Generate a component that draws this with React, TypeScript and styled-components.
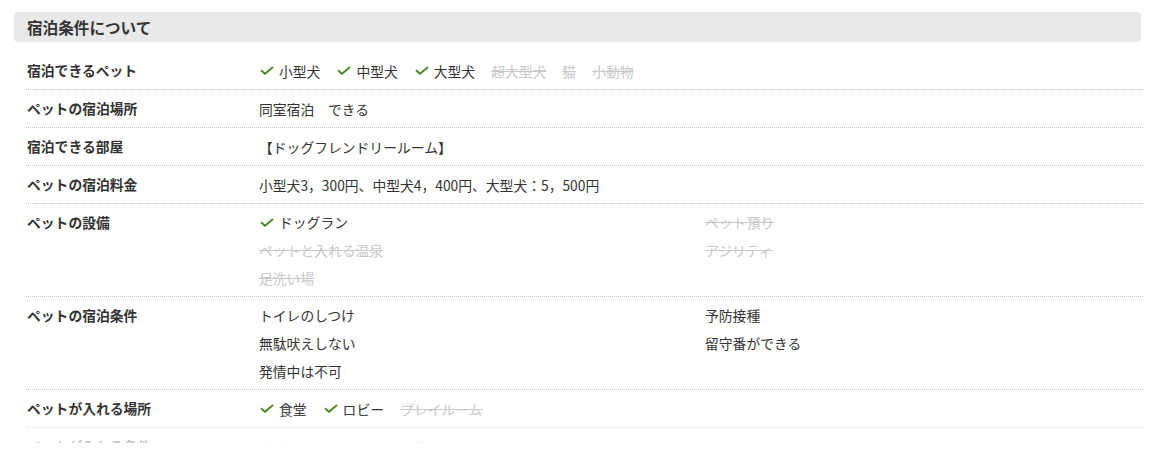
import styled, { createGlobalStyle } from "styled-components";

const GlobalStyle = createGlobalStyle`
    html, body {
        margin: 0;
        padding: 0;
        background: #fff;
    }
    body {
        font-family: "Noto Sans CJK JP", "Noto Sans", sans-serif;
        color: #333;
    }
`

type Item = { text: string; checked?: boolean; off?: boolean }
type Row = { label: string; items: Item[]; columns?: boolean }

const rows: Row[] = [
    {
        label: "宿泊できるペット",
        items: [
            { text: "小型犬", checked: true },
            { text: "中型犬", checked: true },
            { text: "大型犬", checked: true },
            { text: "超大型犬", off: true },
            { text: "猫", off: true },
            { text: "小動物", off: true },
        ],
    },
    { label: "ペットの宿泊場所", items: [{ text: "同室宿泊　できる" }] },
    { label: "宿泊できる部屋", items: [{ text: "【ドッグフレンドリールーム】" }] },
    { label: "ペットの宿泊料金", items: [{ text: "小型犬3，300円、中型犬4，400円、大型犬：5，500円" }] },
    {
        label: "ペットの設備",
        columns: true,
        items: [
            { text: "ドッグラン", checked: true },
            { text: "ペット預り", off: true },
            { text: "ペットと入れる温泉", off: true },
            { text: "アジリティ", off: true },
            { text: "足洗い場", off: true },
        ],
    },
    {
        label: "ペットの宿泊条件",
        columns: true,
        items: [
            { text: "トイレのしつけ" },
            { text: "予防接種" },
            { text: "無駄吠えしない" },
            { text: "留守番ができる" },
            { text: "発情中は不可" },
        ],
    },
    {
        label: "ペットが入れる場所",
        items: [
            { text: "食堂", checked: true },
            { text: "ロビー", checked: true },
            { text: "プレイルーム", off: true },
        ],
    },
    {
        label: "ペットが入れる条件",
        items: [
            { text: "首輪", off: true },
            { text: "リード", off: true },
            { text: "ケージに入れる", off: true },
        ],
    },
]

const Section = styled.section`
    padding: 12px 21px 0 14px;
`

const SectionTitle = styled.h2`
    margin: 0;
    height: 30px;
    display: flex;
    align-items: center;
    padding-left: 13px;
    background-color: #e8e8e8;
    border-radius: 4px;
    font-size: 15.6px;
    font-weight: 700;
    color: #333;
`

const Rows = styled.div`
    position: relative;
    margin: 10px -2px 0 12px;
    max-height: 391px;
    overflow: hidden;
`

const Fade = styled.div`
    position: absolute;
    left: 0;
    right: 0;
    bottom: 0;
    height: 32px;
    background: linear-gradient(rgba(255, 255, 255, 0), rgba(255, 255, 255, 0.75));
    pointer-events: none;
`

const InfoRow = styled.div`
    display: flex;
    padding: 4px 0;
    border-bottom: 1px dotted #c4c4c4;
`

const Label = styled.div`
    flex: 0 0 232px;
    padding-left: 1px;
    line-height: 29px;
    font-size: 13.8px;
    font-weight: 700;
    color: #333;
`

const Values = styled.div<{ $columns?: boolean }>`
    flex: 1;
    display: ${p => (p.$columns ? "grid" : "flex")};
    grid-template-columns: 446px 1fr;
    flex-wrap: wrap;
    align-items: center;
`

const Value = styled.span<{ $off?: boolean; $inline?: boolean }>`
    display: inline-flex;
    align-items: center;
    line-height: 28px;
    margin-right: ${p => (p.$inline ? "16px" : "0")};
    font-size: 13.8px;
    color: ${p => (p.$off ? "#c8c8c8" : "#333")};
    text-decoration: ${p => (p.$off ? "line-through" : "none")};
    white-space: nowrap;
`

const Check = styled.svg`
    width: 14px;
    height: 9px;
    margin: 0 5px 0 1px;
    flex: none;
`

const CheckMark = () => (
    <Check viewBox="0 0 14 9">
        <polyline points="1,4.2 5,7.8 13,1" fill="none" stroke="#4e8a2c" strokeWidth="2" />
    </Check>
)

const App = () => {
    return (
        <>
            <GlobalStyle />
            <Section>
                <SectionTitle>宿泊条件について</SectionTitle>
                <Rows>
                    {rows.map(row => (
                        <InfoRow key={row.label}>
                            <Label>{row.label}</Label>
                            <Values $columns={row.columns}>
                                {row.items.map(item => (
                                    <Value key={item.text} $off={item.off} $inline={!row.columns}>
                                        {item.checked && <CheckMark />}
                                        {item.text}
                                    </Value>
                                ))}
                            </Values>
                        </InfoRow>
                    ))}
                    <Fade />
                </Rows>
            </Section>
        </>
    )
}

export default App
